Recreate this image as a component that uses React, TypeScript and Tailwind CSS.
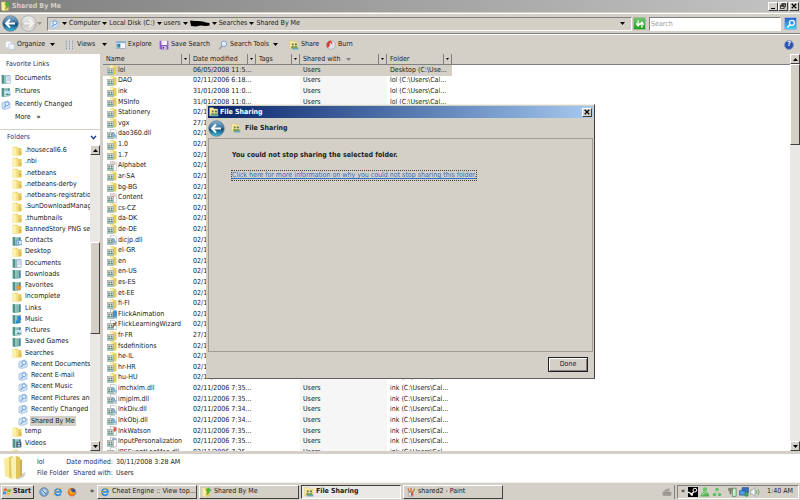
import React from "react";

type IconKind =
  | "folder" | "book" | "search" | "shared" | "dll" | "page" | "contacts" | "docs"
  | "fav" | "music" | "pics" | "videos" | "movie" | "pen" | "watson" | "app";

const RAISED = "border border-t-white border-l-white border-r-[#404040] border-b-[#404040] bg-[#d4d0c8]";
const SUNKEN = "border border-t-[#808080] border-l-[#808080] border-r-white border-b-white";

function People() {
  return (
    <g>
      <rect x="0.5" y="5.5" width="10" height="9.500" fill="#d3dcd6" stroke="#9aa8a0" />
      <circle cx="3.400" cy="8.600" r="1.300" fill="#6f7f76" />
      <circle cx="7.400" cy="8.600" r="1.300" fill="#6f7f76" />
      <path d="M1.500 13c0-3.600 3.800-3.600 3.800 0zM5.600 13c0-3.600 3.800-3.600 3.800 0z" fill="#5f9184" />
      <path d="M1 14h9" stroke="#7fc0c4" />
    </g>
  );
}

const bookKinds: IconKind[] = ["book", "contacts", "docs", "fav", "music", "pics", "videos"];
const pageKinds: IconKind[] = ["dll", "page", "movie", "pen", "watson", "app"];

function Icon({ kind, size = "size-[10px]" }: { kind: IconKind; size?: string }) {
  return (
    <svg viewBox="0 0 16 16" className={`${size} shrink-0`} aria-hidden="true">
      {kind === "folder" && (
        <g>
          <path d="M1 1h8l1 2h5v12H1z" fill="#ecd473" />
          <path d="M1 1l6 2v13l-6-2z" fill="#fbf1ac" />
          <path d="M7 3h3v12l-3 1z" fill="#f5e38c" />
          <path d="M10 4h5v10l-5 1z" fill="#e9cd68" />
          <path d="M12 9h3v5h-3z" fill="#dbb94d" />
        </g>
      )}
      {kind === "shared" && (
        <g>
          <path d="M5 0h6l1 2h3v13H5z" fill="#f2e088" />
          <path d="M11 2h4v12l-4 1z" fill="#e5ca60" />
          <path d="M5 0l4 2v6H5z" fill="#fbf3b5" />
          <People />
        </g>
      )}
      {pageKinds.includes(kind) && (
        <g>
          <path d="M5.500 0.500h7l3 3v12h-10z" fill="#fdfdfd" stroke="#a5a9ae" />
          <People />
        </g>
      )}
      {kind === "dll" && (
        <g fill="none" stroke="#6c9cc8" strokeWidth="1.600">
          <circle cx="10" cy="8" r="2" />
          <circle cx="13" cy="11.500" r="1.600" />
        </g>
      )}
      {kind === "page" && <path d="M7 3h6M7 5h7" stroke="#c08a70" />}
      {kind === "movie" && <path d="M10 3h5v10h-5zM10 6h5M10 9h5" fill="#58a8dd" stroke="#2f6ea8" />}
      {kind === "pen" && <path d="M9 12L15 3M10 5l5 4" stroke="#8a5a34" strokeWidth="2" />}
      {kind === "watson" && <path d="M10 2h5v5l-3 3z" fill="#e0574c" />}
      {kind === "app" && <path d="M8 2h7v3H8z" fill="#8aa6c9" />}
      {bookKinds.includes(kind) && (
        <g>
          <path d="M1 1l4 1v14l-4-1z" fill="#4f938c" />
          <path d="M5 2h6v13l-6 1z" fill="#7fb8b0" />
          <path d="M11 2h3v12l-3 1z" fill="#4b8a94" />
          <path d="M6.500 3v11" stroke="#a9d3cc" />
        </g>
      )}
      {kind === "contacts" && <path d="M7 7h9v7H7z" fill="#d9ecfa" stroke="#3f86bd" />}
      {kind === "contacts" && <path d="M9 9h2v3H9z" fill="#3d6f9c" />}
      {kind === "docs" && <path d="M8 3h7v12H8z" fill="#eef3fa" stroke="#9db0c8" />}
      {kind === "docs" && <path d="M10 6h4M10 8h4M10 10h4" stroke="#8fb0da" />}
      {kind === "fav" && <path d="M11 5l1.600 3.400 3.400.5-2.400 2.500.6 3.600-3.200-1.700-3.200 1.700.6-3.600L6 8.900l3.400-.5z" fill="#f59331" />}
      {kind === "music" && <path d="M10 4v8M10 4q4 1 4 5" stroke="#1c86dd" strokeWidth="2" fill="none" />}
      {kind === "music" && <circle cx="8.600" cy="12.500" r="2.500" fill="#1c86dd" />}
      {kind === "pics" && <path d="M6 7h10v7H6z" fill="#b9e0f5" stroke="#e9f2f7" />}
      {kind === "pics" && <path d="M7 13l3-3 2 2 2-1 1 2z" fill="#41885a" />}
      {kind === "videos" && <path d="M7 6h8v9H7z" fill="#44566b" />}
      {kind === "videos" && <path d="M9 7h4v3H9zM9 11h4v3H9z" fill="#9cc7e6" />}
      {kind === "search" && (
        <g>
          <path d="M1.500 4.500l9-3 4 3v8l-9 3-4-2z" fill="#cfe2f6" stroke="#94b4dc" />
          <circle cx="9.500" cy="6" r="3" fill="#eaf5ff" stroke="#5c8dcc" strokeWidth="1.200" />
          <path d="M8 8.500L4.500 13" stroke="#5c8dcc" strokeWidth="1.600" />
        </g>
      )}
    </svg>
  );
}

function Down({ className = "text-black" }: { className?: string }) {
  return (
    <svg viewBox="0 0 5 3" className={`h-[3px] w-[5px] shrink-0 ${className}`} aria-hidden="true">
      <path d="M0 0h5L2.500 3z" fill="currentColor" />
    </svg>
  );
}

function Up() {
  return (
    <svg viewBox="0 0 5 3" className="h-[3px] w-[5px]" aria-hidden="true">
      <path d="M0 3h5L2.500 0z" fill="#000" />
    </svg>
  );
}

function SharedArrow() {
  return (
    <svg viewBox="0 0 16 16" className="size-[10px] shrink-0" aria-hidden="true">
      <path d="M1 1h6l1 2h4v12H1z" fill="#e6cb5d" />
      <path d="M1 1l5 2v13l-5-2z" fill="#fbf0a8" />
      <path d="M10 1l5 4-3 1c0 4-2 5-5 6 2-2 2-4 1-6l-2-1z" fill="#45b83a" stroke="#2a8a2a" strokeWidth=".5" />
    </svg>
  );
}

function ShareIcon() {
  return (
    <svg viewBox="0 0 16 16" className="size-[10px] shrink-0" aria-hidden="true">
      <path d="M1 1h6l1 2h6v11H1z" fill="#f7ec9f" stroke="#d2b958" strokeWidth=".6" />
      <circle cx="6" cy="7" r="1.800" fill="#8b7a48" />
      <circle cx="11" cy="7" r="1.800" fill="#5a766b" />
      <path d="M3 13c0-5 6-5 6 0zM8 13c0-5 6-5 6 0z" fill="#7f9d62" />
      <path d="M5 14h10" stroke="#4aa7bd" strokeWidth="2" />
    </svg>
  );
}

function NavOrb({ id, back = false }: { id: string; back?: boolean }) {
  return (
    <svg viewBox="0 0 34 34" className="size-[17px] shrink-0" aria-hidden="true">
      <defs>
        <linearGradient id={id} x1="0" y1="0" x2="0" y2="1">
          <stop offset="0" stopColor={back ? "#8fb4cf" : "#efefed"} />
          <stop offset=".48" stopColor={back ? "#2f6c9c" : "#d6d5d1"} />
          <stop offset=".52" stopColor={back ? "#0e4272" : "#c6c4be"} />
          <stop offset="1" stopColor={back ? "#3fc3e6" : "#e9e8e4"} />
        </linearGradient>
      </defs>
      <circle cx="17" cy="17" r="15.500" fill={`url(#${id})`} stroke={back ? "#56758c" : "#a5a39d"} strokeWidth="1.500" />
      {back ? (
        <path d="M16 9l-8 8 8 8M8 17h18" fill="none" stroke="#fff" strokeWidth="4" />
      ) : (
        <path d="M18 9l8 8-8 8M26 17H8" fill="none" stroke="#f4f3f1" strokeWidth="4" />
      )}
    </svg>
  );
}

function CloseX() {
  return (
    <svg viewBox="0 0 8 8" className="size-[6px]" aria-hidden="true">
      <path d="M1 1l6 6M7 1L1 7" stroke="#000" strokeWidth="1.600" />
    </svg>
  );
}

function ScrollBar({ thumb, lead }: { thumb: string; lead: string }) {
  return (
    <div className="flex w-[10px] shrink-0 flex-col bg-[#eae8e4]">
      <button aria-label="Scroll up" className={`flex h-[10px] items-center justify-center ${RAISED}`}><Up /></button>
      <div className={lead} />
      <div className={`${thumb} ${RAISED}`} />
      <div className="flex-1" />
      <button aria-label="Scroll down" className={`flex h-[10px] items-center justify-center ${RAISED}`}><Down /></button>
    </div>
  );
}

const toolIcons: Record<string, React.ReactNode> = {
  Organize: <g><path d="M1 2h7l2 2v8H1z" fill="#fff" stroke="#c5cedb" /><path d="M6 6h7l2 2v7H6z" fill="#eef5fc" stroke="#adc1d8" /></g>,
  Views: (
    <g>
      <path d="M1 1h14v14H1z" fill="#f1f0ed" />
      <path d="M1 2h2M6 2h2M11 2h2M1 5h2M6 5h2M11 5h2M1 8h2M6 8h2M11 8h2M1 11h2M6 11h2M11 11h2M1 14h2M6 14h2M11 14h2" stroke="#5f7391" strokeWidth="1.500" />
      <path d="M4.500 1v14M9.500 1v14M14.500 1v14" stroke="#aaa79f" />
    </g>
  ),
  Explore: <g><path d="M.5 2.500h15v11H.5z" fill="#f4faff" stroke="#7790ab" /><path d="M1 3h14v2H1z" fill="#7fb0de" /><path d="M2 6h5v6H2z" fill="#2f78c0" /><path d="M3 9h3v3H3z" fill="#3d9a6d" /></g>,
  "Save Search": <g><path d="M1 1h14v14H3l-2-2z" fill="#8a5cc0" /><path d="M4 1h9v7H4z" fill="#f4f0fb" /><path d="M5 10h7v5H5z" fill="#d4c8e8" /><path d="M6 11h2v3H6z" fill="#4d2f85" /></g>,
  "Search Tools": <g><circle cx="9.500" cy="6" r="4.500" fill="#dcefff" stroke="#7d9ec2" strokeWidth="1.500" /><path d="M6.500 9.500L2 15" stroke="#8c98a8" strokeWidth="2.200" /></g>,
  Burn: <g><circle cx="8" cy="8" r="7" fill="#e3e6ea" stroke="#9a9ea5" /><path d="M8 1a7 7 0 0 0-5 12l3-4c-1-2 1-3 0-5 3 1 4 3 3 5 2-2 1-6-1-8z" fill="#db3a34" /><circle cx="9" cy="9" r="1.800" fill="#fff" stroke="#999" strokeWidth=".6" /></g>,
};

const tools: { label: string; width: string; menu?: string }[] = [
  { label: "Organize", width: "w-[60px]", menu: "ml-[5px]" },
  { label: "Views", width: "w-[51px]", menu: "ml-[7px]" },
  { label: "Explore", width: "w-[43px]" },
  { label: "Save Search", width: "w-[59px]" },
  { label: "Search Tools", width: "w-[71px]", menu: "ml-[4px]" },
  { label: "Share", width: "w-[37px]" },
  { label: "Burn", width: "w-[30px]" },
];

const tree: [string, IconKind, boolean?][] = [
  [".housecall6.6", "folder"], [".nbi", "folder"], [".netbeans", "folder"], [".netbeans-derby", "folder"],
  [".netbeans-registratio", "folder"], [".SunDownloadManag", "folder"], [".thumbnails", "folder"],
  ["BannedStory PNG sec", "folder"], ["Contacts", "contacts"], ["Desktop", "folder"], ["Documents", "docs"],
  ["Downloads", "book"], ["Favorites", "fav"], ["Incomplete", "folder"], ["Links", "book"], ["Music", "music"],
  ["Pictures", "pics"], ["Saved Games", "book"], ["Searches", "folder"], ["Recent Documents", "search", true],
  ["Recent E-mail", "search", true], ["Recent Music", "search", true], ["Recent Pictures and", "search", true],
  ["Recently Changed", "search", true], ["Shared By Me", "search", true], ["temp", "folder"], ["Videos", "videos"],
  ["", "folder"],
];

const D = "02/11/2006 6:35...";
const INK = "ink (C:\\Users\\Cal...";
const LOL = "lol (C:\\Users\\Cal...";
const files: [string, IconKind, string, string][] = [
  ["lol", "shared", "06/05/2008 11:5...", "Desktop (C:\\Use..."],
  ["DAO", "shared", "02/11/2006 6:18...", LOL],
  ["ink", "shared", "31/01/2008 11:0...", LOL],
  ["MSInfo", "shared", "31/01/2008 11:0...", LOL],
  ["Stationery", "shared", D, LOL],
  ["vgx", "shared", "27/11/2008 6:35...", LOL],
  ["dao360.dll", "dll", D, LOL],
  ["1.0", "shared", D, INK],
  ["1.7", "shared", D, INK],
  ["Alphabet", "page", D, INK],
  ["ar-SA", "shared", D, INK],
  ["bg-BG", "shared", D, INK],
  ["Content", "page", D, INK],
  ["cs-CZ", "shared", D, INK],
  ["da-DK", "shared", D, INK],
  ["de-DE", "shared", D, INK],
  ["dicjp.dll", "dll", D, INK],
  ["el-GR", "shared", D, INK],
  ["en", "shared", D, INK],
  ["en-US", "shared", D, INK],
  ["es-ES", "shared", D, INK],
  ["et-EE", "shared", D, INK],
  ["fi-FI", "shared", D, INK],
  ["FlickAnimation", "movie", D, INK],
  ["FlickLearningWizard", "pen", D, INK],
  ["fr-FR", "shared", "27/11/2008 6:35...", INK],
  ["fsdefinitions", "shared", D, INK],
  ["he-IL", "shared", D, INK],
  ["hr-HR", "shared", D, INK],
  ["hu-HU", "shared", D, INK],
  ["imchxlm.dll", "dll", "02/11/2006 7:35...", INK],
  ["imjplm.dll", "dll", "02/11/2006 7:35...", INK],
  ["InkDiv.dll", "dll", "02/11/2006 7:34...", INK],
  ["InkObj.dll", "dll", "02/11/2006 7:34...", INK],
  ["InkWatson", "watson", "02/11/2006 7:35...", INK],
  ["InputPersonalization", "app", "02/11/2006 7:35...", INK],
  ["IPSEventLogMsg.dll", "dll", "02/11/2006 7:35...", INK],
];

const columns: [string, string][] = [
  ["Name", "w-[87px]"], ["Date modified", "w-[66px]"], ["Tags", "w-[44px]"], ["Shared with", "w-[87px]"], ["Folder", "w-[65px]"],
];

function TitleBar() {
  return (
    <header className="flex h-[12px] shrink-0 items-center gap-[1px] bg-linear-to-r from-[#808080] to-[#c4c4c4] px-[1px]">
      <SharedArrow />
      <h1 className="flex-1 font-bold text-[#d4d0c8]">Shared By Me</h1>
      <div className="flex">
        <button aria-label="Minimize" className={`flex h-[9px] w-[10px] items-end justify-center pb-[1px] ${RAISED}`}>
          <span className="h-[1px] w-[4px] bg-black" />
        </button>
        <button aria-label="Restore" className={`flex h-[9px] w-[10px] items-center justify-center ${RAISED}`}>
          <svg viewBox="0 0 8 8" className="size-[6px]" aria-hidden="true">
            <path d="M2.500 3V1h5v4H6M.5 3.500h5v4h-5zM.5 4.200h5M2.500 1.500h5" fill="none" stroke="#000" />
          </svg>
        </button>
      </div>
      <button aria-label="Close" className={`flex h-[9px] w-[10px] items-center justify-center ${RAISED}`}><CloseX /></button>
    </header>
  );
}

function AddressBar() {
  const crumbs = ["Computer", "Local Disk (C:)", "users", "", "Searches", "Shared By Me"];
  return (
    <nav className="mt-[1px] flex h-[21px] shrink-0 items-center border-y border-t-white border-b-[#808080] pl-[2px] pr-[3px]">
      <button aria-label="Back"><NavOrb id="navBack" back /></button>
      <button aria-label="Forward" className="ml-[1px]"><NavOrb id="navForward" /></button>
      <Down className="text-[#9a9790]" />
      <div className={`ml-[5px] flex h-[14px] flex-1 items-center pl-[1px] pr-[6px] ${SUNKEN}`}>
        <Icon kind="search" />
        <ul className="ml-[1px] flex flex-1 items-center">
          {crumbs.map((c, i) => (
            <li key={i} className="flex items-center">
              <span className="flex w-[9px] justify-center"><Down /></span>
              {c ? (
                <button>{c}</button>
              ) : (
                <svg viewBox="0 0 40 14" className="h-[7px] w-[20px]" aria-hidden="true">
                  <path d="M0 1l10 1 6 0 10 1 6 2 7 1v5l-8 1-10-1-9 2-10-1z" fill="#000" />
                </svg>
              )}
            </li>
          ))}
        </ul>
        <button aria-label="Previous locations" className="flex"><Down /></button>
      </div>
      <button aria-label="Refresh" className="ml-[1px] flex size-[13px] items-center justify-center rounded-[1px] border border-[#a5b8a0] bg-linear-to-b from-[#6fc46f] to-[#12a312]">
        <svg viewBox="0 0 16 16" className="size-[10px]" aria-hidden="true">
          <path d="M5 2v8M2 7l3 4 3-4M11 14V6M8 9l3-4 3 4" fill="none" stroke="#fff" strokeWidth="2" />
        </svg>
      </button>
      <input aria-label="Search" placeholder="Search" className={`ml-[3px] h-[14px] w-[132px] bg-white px-[1px] outline-none placeholder:text-[#9a9a9a] ${SUNKEN}`} />
      <button aria-label="Go" className="ml-[3px] flex size-[13px] items-center justify-center rounded-[1px] border border-[#9fb4d8] bg-linear-to-b from-[#2d5fd0] to-[#3fd0f0]">
        <svg viewBox="0 0 16 16" className="size-[10px]" aria-hidden="true">
          <circle cx="9.500" cy="6" r="4" fill="none" stroke="#fff" strokeWidth="2" />
          <path d="M6.500 9L2 13.500" stroke="#fff" strokeWidth="2.400" />
        </svg>
      </button>
    </nav>
  );
}

function Toolbar() {
  return (
    <div className="flex h-[20px] shrink-0 items-center border-t border-white pl-[5px] pr-[6px]">
      {tools.map((t) => (
        <button key={t.label} className={`flex items-center ${t.width}`}>
          {t.label === "Share" ? (
            <ShareIcon />
          ) : (
            <svg viewBox="0 0 16 16" className="size-[10px] shrink-0" aria-hidden="true">{toolIcons[t.label]}</svg>
          )}
          <span className="ml-[2px] whitespace-nowrap">{t.label}</span>
          {t.menu && <span className={t.menu}><Down /></span>}
        </button>
      ))}
      <button aria-label="Help" className="ml-auto flex size-[10px] items-center justify-center rounded-full border border-[#8c9bc0] bg-[#2a52b4] font-bold text-white">?</button>
    </div>
  );
}

function Sidebar() {
  const links: [string, IconKind][] = [["Documents", "docs"], ["Pictures", "pics"], ["Recently Changed", "search"]];
  return (
    <aside className="flex w-[100px] shrink-0 flex-col">
      <section className="h-[75px] shrink-0 bg-white pt-[4px]">
        <h2 className="h-[12px] pl-[6px] leading-[12px] text-[#1f2f5c]">Favorite Links</h2>
        <ul className="mt-[2px]">
          {links.map(([label, kind]) => (
            <li key={label}>
              <a href="#" className="flex h-[13px] items-center gap-[4px] pl-[1px]"><Icon kind={kind} />{label}</a>
            </li>
          ))}
          <li><button className="flex h-[12px] items-center gap-[6px] pl-[15px]">More <b>»</b></button></li>
        </ul>
      </section>
      <section className="mt-[1px] flex min-h-0 flex-1 flex-col bg-white">
        <button className="flex h-[15px] shrink-0 items-center justify-between pl-[7px] pr-[3px] text-[#15328f]">
          Folders
          <svg viewBox="0 0 8 6" className="h-[5px] w-[7px]" aria-hidden="true"><path d="M1 1l3 3.500L7 1" fill="none" stroke="#15328f" strokeWidth="1.600" /></svg>
        </button>
        <div className="flex min-h-0 flex-1">
          <div className="min-w-0 flex-1 overflow-hidden">
            <ul className="grid h-[calc(100%+9px)] auto-rows-fr">
              {tree.map(([label, kind, sub], i) => (
                <li key={i} className={`flex min-h-0 items-center gap-[2px] whitespace-nowrap ${sub ? "pl-[18px]" : "pl-[12px]"}`}>
                  <Icon kind={kind} />
                  {label && <button className={label === "Shared By Me" ? "bg-[#d4d0c8] px-[1px] leading-[10px]" : "px-[1px]"}>{label}</button>}
                </li>
              ))}
            </ul>
          </div>
          <ScrollBar lead="h-[87px]" thumb="h-[92px]" />
        </div>
      </section>
    </aside>
  );
}

function FileList() {
  return (
    <main className="ml-[3px] flex min-w-0 flex-1 bg-white">
      <div className="flex min-w-0 flex-1 flex-col overflow-hidden">
        <div className="h-[11px] shrink-0 border-b border-[#808080] bg-[#d4d0c8]" />
        <div className="-mt-[11px] min-h-0 flex-1">
          <table className="h-[calc(100%+7px)] table-fixed border-collapse">
            <thead>
              <tr className="h-[11px] bg-[#d4d0c8]">
                {columns.map(([label, w]) => (
                  <th key={label} className={`${w} h-[11px] p-0 text-left font-normal`}>
                    <div className="flex h-[11px] items-center border-b border-[#808080] pl-[3px]">
                      <span className="whitespace-nowrap">{label}</span>
                      {label === "Shared with" && <span className="ml-[5px]"><Down className="text-[#808080]" /></span>}
                      <button aria-label={`Filter ${label}`} className="ml-auto flex h-[10px] w-[9px] items-center justify-center border-x border-[#808080]">
                        <svg viewBox="0 0 5 3" className="h-[2px] w-[3px]" aria-hidden="true"><path d="M0 0h5L2.500 3z" /></svg>
                      </button>
                    </div>
                  </th>
                ))}
              </tr>
            </thead>
            <tbody>
              {files.map(([name, kind, date, folder], i) => (
                <tr key={name} className={`whitespace-nowrap ${i === 0 ? "bg-[#d4d0c8]" : ""}`}>
                  <td className="p-0 pl-[4px]"><div className="flex items-center gap-[1px]"><Icon kind={kind} />{name}</div></td>
                  <td className="p-0 pl-[3px]">{date}</td>
                  <td className="p-0" />
                  <td className={`p-0 pl-[3px] ${i === 0 ? "" : "bg-[#f6f6f6]"}`}>Users</td>
                  <td className="p-0 pl-[3px]">{folder}</td>
                </tr>
              ))}
            </tbody>
          </table>
        </div>
      </div>
      <ScrollBar lead="h-0" thumb="h-[81px]" />
    </main>
  );
}

function Details() {
  return (
    <section className="flex h-[31px] shrink-0 items-center border-t-[3px] border-[#d4d0c8] bg-white pl-[3px]">
      <svg viewBox="0 0 24 26" className="h-[26px] w-[24px]" aria-hidden="true">
        <path d="M15 20l8-3-2 5-7 3z" fill="#cfcfcb" />
        <path d="M1 4l5-2 2 22-6-3z" fill="#f8eb9c" />
        <path d="M6 2l4-1v23l-4-2z" fill="#e3cd68" />
        <path d="M8 3l5-2v22l-4 2z" fill="#faf2b4" />
        <path d="M13 1l4 1v20l-4 2z" fill="#e0c659" />
        <path d="M17 4l2 1v16l-2 1z" fill="#cdb04a" />
      </svg>
      <dl className="ml-[10px] grid grid-cols-[76px_auto] gap-x-[3px] leading-[11px]">
        <dt className="flex justify-between text-[#1f2f5c]"><b className="font-normal">lol</b><span>Date modified:</span></dt>
        <dd>30/11/2008 3:28 AM</dd>
        <dt className="flex justify-between text-[#1f2f5c]"><b className="font-normal">File Folder</b><span>Shared with:</span></dt>
        <dd>Users</dd>
      </dl>
    </section>
  );
}

function Ie() {
  return (
    <svg viewBox="0 0 16 16" className="size-[10px] shrink-0" aria-hidden="true">
      <path d="M12.500 10.500A5 5 0 1 1 13 8H4" fill="none" stroke="#2b8ae0" strokeWidth="2.600" />
      <path d="M1 14C-1 11 9 0 15 2" fill="none" stroke="#f0b429" strokeWidth="1.400" />
    </svg>
  );
}

function Paint() {
  return (
    <svg viewBox="0 0 16 16" className="size-[10px] shrink-0" aria-hidden="true">
      <path d="M4 8h8l-1 7H5z" fill="#dfe7ee" stroke="#8798a8" />
      <path d="M6 9L3 2M8 9V1M10 9l4-6" stroke="#c8702c" strokeWidth="1.800" />
      <path d="M8 9h3v5H8z" fill="#c8483a" />
    </svg>
  );
}

function Taskbar() {
  const tasks: [string, React.ReactNode][] = [
    ["Cheat Engine :: View top...", <Ie />],
    ["Shared By Me", <SharedArrow />],
    ["File Sharing", <ShareIcon />],
    ["shared2 - Paint", <Paint />],
  ];
  return (
    <footer className="flex h-[18px] shrink-0 items-center border-t border-[#f3f1ec] bg-[#d4d0c8] px-[1px]">
      <button className={`flex h-[14px] w-[33px] items-center gap-[1px] font-bold ${RAISED}`}>
        <svg viewBox="0 0 16 16" className="size-[10px] shrink-0" aria-hidden="true">
          <path d="M3 3q3-2 5 0l-1 4q-2-2-5 0z" fill="#e8663a" />
          <path d="M9 3q3 2 6 0l-1 4q-3 2-6 0z" fill="#76b83f" />
          <path d="M2 8q3-2 5 0l-1 4q-2-2-5 0z" fill="#3f8fd8" />
          <path d="M8 8q3 2 6 0l-1 4q-3 2-6 0z" fill="#f2bd35" />
        </svg>
        Start
      </button>
      <div className="ml-[5px] flex w-[58px] items-center gap-[4px]">
        <button aria-label="Show desktop">
          <svg viewBox="0 0 16 16" className="size-[10px]" aria-hidden="true">
            <circle cx="8" cy="8" r="7" fill="#7ba3cf" stroke="#5d7897" />
            <path d="M3 6l5-3 5 3-5 7z" fill="#c3d7ea" />
            <path d="M11 11L5 5" stroke="#49688c" strokeWidth="1.500" />
          </svg>
        </button>
        <button aria-label="Internet Explorer"><Ie /></button>
        <button aria-label="Firefox">
          <svg viewBox="0 0 16 16" className="size-[10px]" aria-hidden="true">
            <circle cx="8" cy="8" r="7" fill="#e8731c" />
            <circle cx="9" cy="6.500" r="4" fill="#2f56a8" />
            <path d="M2 3c2 1 3 0 5 2 0 3 3 4 7 3-1 5-9 5-10 1z" fill="#f6a326" />
          </svg>
        </button>
        <button aria-label="More shortcuts" className="ml-auto pr-[3px] font-bold">»</button>
      </div>
      <div className="flex gap-[2px]">
        {tasks.map(([label, icon]) => (
          <button
            key={label}
            className={`flex h-[14px] w-[100px] items-center gap-[2px] whitespace-nowrap pl-[2px] ${
              label === "File Sharing" ? "border border-t-[#404040] border-l-[#404040] border-r-white border-b-white bg-[#ebe9e5] font-bold" : RAISED
            }`}
          >
            {icon}
            {label}
          </button>
        ))}
      </div>
      <svg viewBox="0 0 16 16" className="ml-auto size-[10px]" aria-hidden="true">
        <path d="M1 8l5-5 8-1-3 5h4v7H1z" fill="#b1aea8" />
        <path d="M1 9h14M2 11h12M2 13h12" stroke="#85827c" />
        <path d="M5 6l6-2" stroke="#85827c" />
      </svg>
      <div className="ml-[2px] h-[14px] w-[1px] bg-[#808080]" />
      <div className={`ml-[2px] flex h-[14px] w-[122px] items-center pl-[3px] pr-[5px] ${SUNKEN}`}>
        <button aria-label="Show hidden icons" className="font-bold">«</button>
        <svg viewBox="0 0 16 16" className="ml-[3px] size-[10px]" aria-hidden="true">
          <path d="M0 0h16v16H0z" />
          <circle cx="11" cy="5" r="3" fill="none" stroke="#fff" strokeWidth="1.600" />
          <path d="M0 8l6 3 3-3" fill="none" stroke="#fff" strokeWidth="2" />
          <circle cx="6" cy="12" r="2" fill="#fff" />
        </svg>
        <svg viewBox="0 0 16 16" className="ml-[2px] size-[10px]" aria-hidden="true">
          <circle cx="8" cy="4" r="3.500" fill="#6cc56a" />
          <path d="M1 15c0-10 14-10 14 0z" fill="#56b455" />
          <path d="M4 13c0-4 5-4 7-3" stroke="#bfe8bb" strokeWidth="1.500" fill="none" />
        </svg>
        <svg viewBox="0 0 16 16" className="ml-[2px] size-[10px]" aria-hidden="true">
          <g fill="#3cb843"><circle cx="8" cy="4" r="2.500" /><circle cx="4" cy="12" r="2.500" /><circle cx="12" cy="12" r="2.500" /></g>
          <path d="M8 4L4 12h8z" fill="none" stroke="#8ccf8d" />
        </svg>
        <svg viewBox="0 0 16 16" className="ml-[6px] size-[10px]" aria-hidden="true">
          <path d="M7 2h6v13H7z" fill="#c8f0cf" stroke="#39734a" />
          <path d="M1 2h5v4H5v5H3V6H1z" fill="#8d8a70" stroke="#444" strokeWidth=".6" />
        </svg>
        <svg viewBox="0 0 16 16" className="ml-[1px] size-[10px]" aria-hidden="true">
          <path d="M5 1h10v8H5z" fill="#3172c8" stroke="#1d3f78" />
          <path d="M1 6h9v7H1z" fill="#4fa0e8" stroke="#1d3f78" />
          <circle cx="12" cy="12" r="3.500" fill="#3c9a5c" />
        </svg>
        <svg viewBox="0 0 16 16" className="ml-[1px] size-[10px]" aria-hidden="true">
          <path d="M1 5h3l4-4v14l-4-4H1z" fill="#fafafa" stroke="#7d8a94" />
          <path d="M10 5q2 3 0 6M13 3q3 5 0 10" fill="none" stroke="#4faf58" strokeWidth="1.300" />
        </svg>
        <time className="ml-auto whitespace-nowrap">1:40 AM</time>
      </div>
    </footer>
  );
}

function SharingDialog() {
  return (
    <div role="dialog" aria-label="File Sharing" className="absolute left-[206px] top-[104px] flex h-[275px] w-[389px] flex-col border border-t-[#f1efea] border-l-[#d4d0c8] border-r-[#404040] border-b-[#606060] bg-[#d4d0c8] p-[1px]">
      <div className="flex h-[12px] shrink-0 items-center gap-[1px] bg-linear-to-r from-[#0a246a] to-[#a6caf0] px-[1px] font-bold text-white">
        <ShareIcon />
        <span className="flex-1">File Sharing</span>
        <button aria-label="Close dialog" className={`flex h-[9px] w-[10px] items-center justify-center ${RAISED}`}><CloseX /></button>
      </div>
      <div className="flex h-[20px] shrink-0 items-center gap-[4px]">
        <button aria-label="Go back" className="mr-[2px]"><NavOrb id="dialogBack" back /></button>
        <ShareIcon />
        <h2 className="font-bold">File Sharing</h2>
      </div>
      <div className="flex-1 border border-[#a09d96] pl-[23px] pt-[10px]">
        <p className="leading-[12px] font-bold">You could not stop sharing the selected folder.</p>
        <a href="#" className="mt-[10px] inline-block whitespace-nowrap leading-[9px] text-[#2a6fc9] underline outline-1 outline-dotted outline-[#404040]">
          Click here for more information on why you could not stop sharing this folder.
        </a>
      </div>
      <div className="flex h-[25px] shrink-0 items-center justify-end pr-[5px]">
        <button className="h-[15px] w-[40px] border border-[#202020] bg-[#d4d0c8] shadow-[inset_1px_1px_0_#fff,inset_-1px_-1px_0_#808080]">Done</button>
      </div>
    </div>
  );
}

export default function App() {
  return (
    <div className="relative flex h-screen flex-col overflow-hidden bg-[#d4d0c8] font-['DejaVu_Sans_Condensed','DejaVu_Sans',sans-serif] text-[7px] leading-[9px] text-[#202020]">
      <TitleBar />
      <AddressBar />
      <Toolbar />
      <div className="flex min-h-0 flex-1">
        <Sidebar />
        <FileList />
      </div>
      <Details />
      <Taskbar />
      <SharingDialog />
    </div>
  );
}
